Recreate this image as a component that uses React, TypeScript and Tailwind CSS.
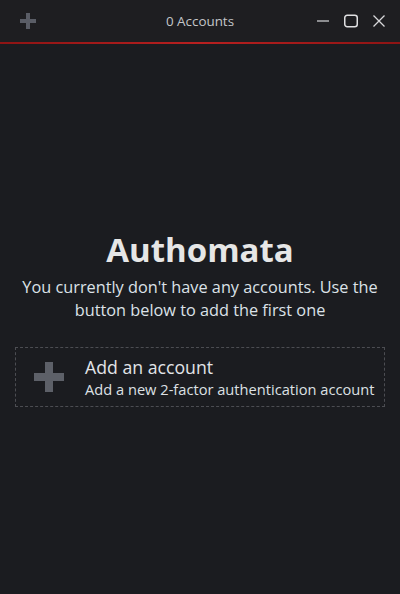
function PlusGlyph({ size, bar, color }: { size: number; bar: number; color: string }) {
    const o = (size - bar) / 2;
    return (
        <svg width={size} height={size} viewBox={`0 0 ${size} ${size}`}>
            <rect x={o} y={0} width={bar} height={size} fill={color} />
            <rect x={0} y={o} width={size} height={bar} fill={color} />
        </svg>
    );
}

export default function App() {
    return (
        <div className="w-[400px] h-[594px] flex flex-col bg-[#1b1c20] font-['Open_Sans',sans-serif] overflow-hidden">
            {/* Barra de título */}
            <div className="h-[42px] shrink-0 grid grid-cols-[1fr_auto_1fr] items-center bg-[#1e1e21] px-[13px]">
                <div className="flex items-center pl-[7px]">
                    <PlusGlyph size={16} bar={4} color="#5a5d66" />
                </div>
                <div className="text-[13.4px] text-[#c4c6c9]">0 Accounts</div>
                <div className="flex items-center justify-end gap-[12px]">
                    <svg width="16" height="16" viewBox="0 0 16 16">
                        <rect x="2" y="7" width="12" height="2" fill="#8c8d90" />
                    </svg>
                    <svg width="16" height="16" viewBox="0 0 16 16">
                        <rect x="1.75" y="2.25" width="12.5" height="11.5" rx="2.5" fill="none" stroke="#e0e0e2" strokeWidth="1.5" />
                    </svg>
                    <svg width="16" height="16" viewBox="0 0 16 16">
                        <path d="M2.5 2.5 L13.5 13.5 M13.5 2.5 L2.5 13.5" stroke="#d8d8da" strokeWidth="1.3" />
                    </svg>
                </div>
            </div>
            <div className="h-[2px] shrink-0 bg-[linear-gradient(90deg,#8e1414,#b82020_50%,#8e1414)]" />

            {/* Contenido */}
            <div className="flex-1 flex flex-col items-center pt-[186px] px-[15px]">
                <h1 className="text-[33px] font-bold leading-[40px] text-[#e6e6e6]">Authomata</h1>
                <p className="mt-[6px] text-[16.3px] leading-[23px] text-[#dce2e8] text-center">
                    You currently don't have any accounts. Use the button below to add the first one
                </p>
                <button className="mt-[25px] w-full h-[60px] flex items-center border border-dashed border-[#4c4d52] text-left cursor-pointer">
                    <div className="w-[66px] flex justify-center">
                        <PlusGlyph size={30} bar={8} color="#5d6068" />
                    </div>
                    <div className="ml-[3px] flex flex-col">
                        <span className="text-[17.7px] leading-[24px] text-[#e2e4e8]">Add an account</span>
                        <span className="text-[14.65px] leading-[20px] text-[#dde0e4]">Add a new 2-factor authentication account</span>
                    </div>
                </button>
            </div>
        </div>
    );
}
